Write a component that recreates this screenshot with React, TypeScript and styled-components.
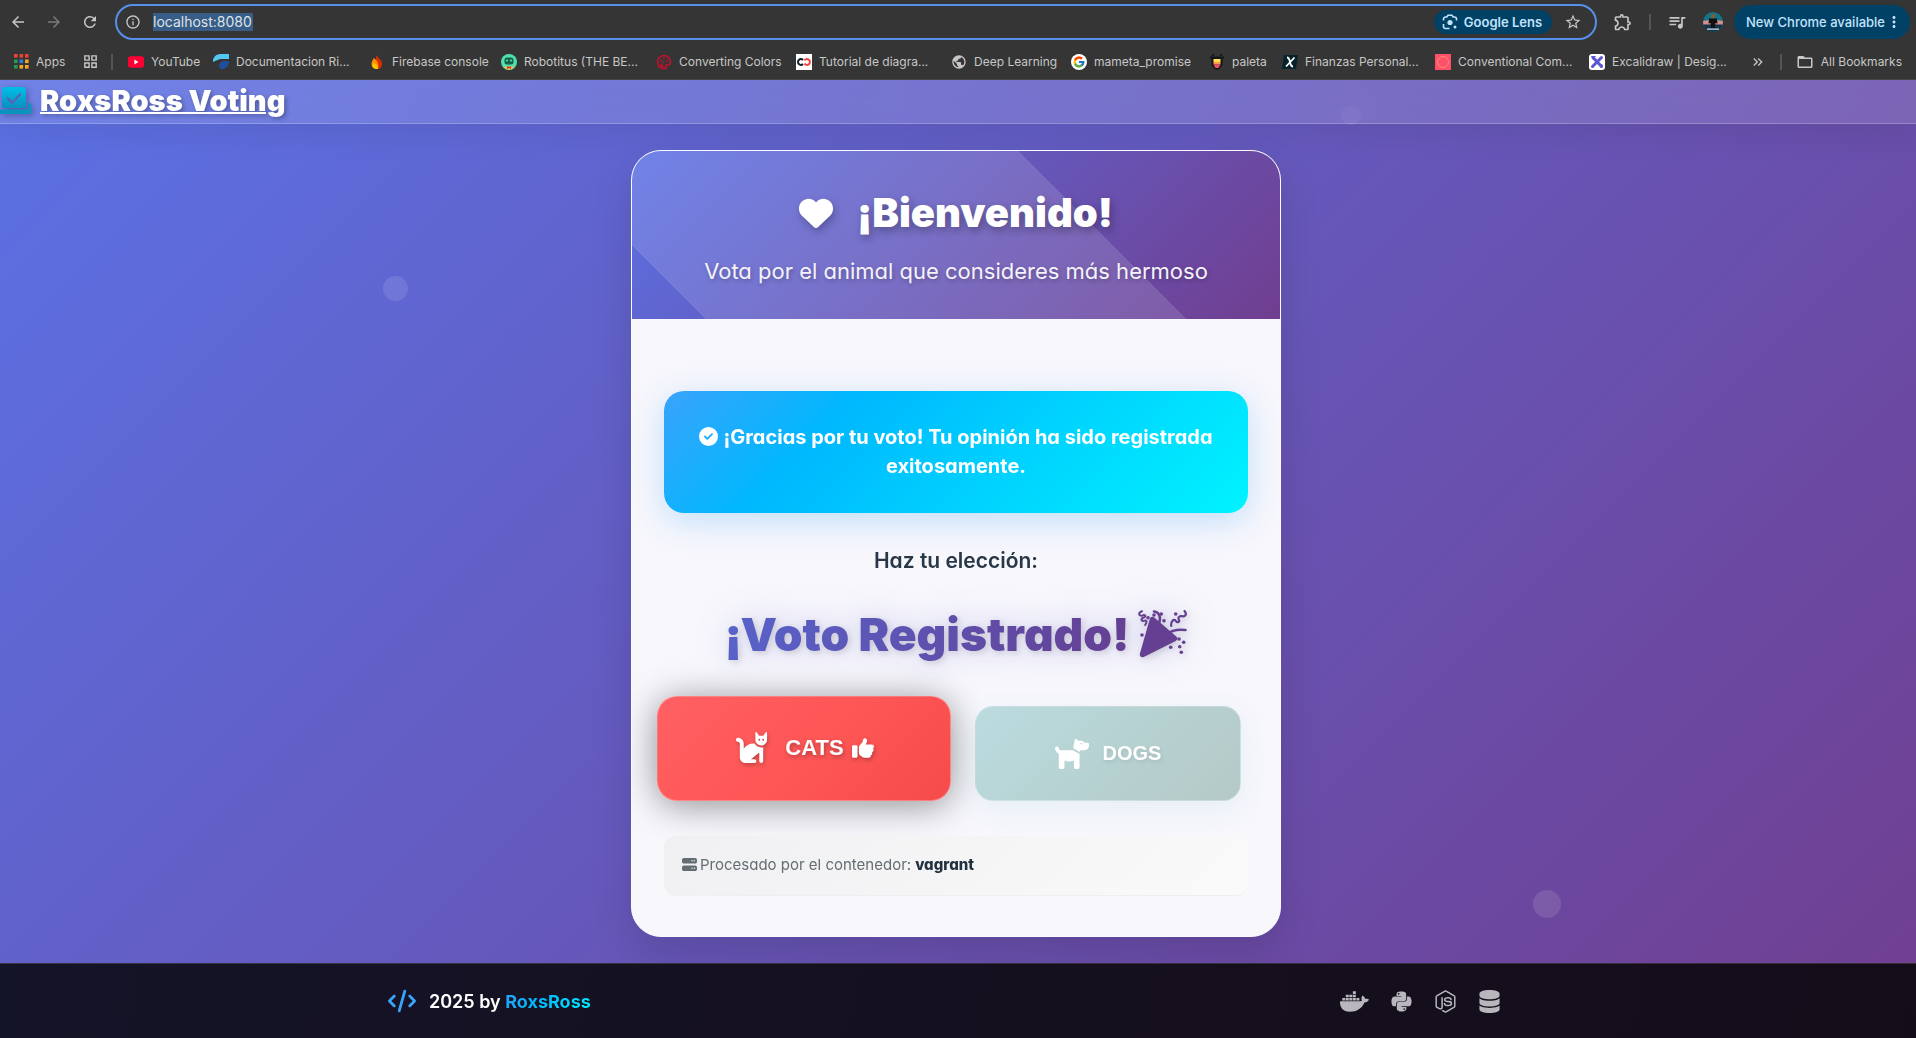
import React from "react";
import styled, { createGlobalStyle, css } from "styled-components";
import {
  MdArrowBack,
  MdArrowForward,
  MdRefresh,
  MdInfoOutline,
  MdStarBorder,
  MdOutlineExtension,
  MdQueueMusic,
  MdMoreVert,
  MdFolderOpen,
  MdPublic,
  MdOutlineGridView,
  MdKeyboardDoubleArrowRight,
} from "react-icons/md";
import { FcGoogle } from "react-icons/fc";
import {
  FaHeart,
  FaCircleCheck,
  FaCat,
  FaDog,
  FaThumbsUp,
  FaServer,
  FaCode,
  FaDocker,
  FaPython,
  FaNodeJs,
  FaDatabase,
} from "react-icons/fa6";

const GlobalStyle = createGlobalStyle`
  *, *::before, *::after { box-sizing: border-box; }
  body {
    margin: 0;
    background: #353535;
    font-family: Inter, "Open Sans", "Liberation Sans", sans-serif;
  }
  h1, h2, h3, p, ul { margin: 0; padding: 0; }
  ul { list-style: none; }
  svg { display: block; flex: none; }
  a { color: inherit; text-decoration: none; }
  button { font: inherit; border: 0; padding: 0; background: none; color: inherit; cursor: pointer; }
`;

const Window = styled.div`
  min-height: 100vh;
  display: flex;
  flex-direction: column;
`;

/* ---------- Browser chrome ---------- */

const Chrome = styled.div`
  background: #353535;
  color: #c7c7c7;
  height: 80px;
  border-bottom: 1px solid #454545;
`;

const Toolbar = styled.div`
  height: 44px;
  display: flex;
  align-items: center;
  padding: 0 6px 0 9px;
`;

const NavGroup = styled.div`
  display: flex;
  gap: 18px;
  margin-right: 16px;
`;

const IconButton = styled.button<{ $dim?: boolean }>`
  display: flex;
  align-items: center;
  justify-content: center;
  color: ${(p) => (p.$dim ? "#7a7a7a" : "#c7c7c7")};
`;

const Omnibox = styled.div`
  flex: 1;
  height: 36px;
  border: 2px solid #5590ea;
  border-radius: 18px;
  display: flex;
  align-items: center;
  padding: 0 13px 0 8px;
  gap: 12px;
`;

const Address = styled.input`
  width: 100px;
  height: 18px;
  border: 0;
  padding: 0;
  outline: none;
  background: #385d86;
  color: #dfe3e8;
  font: 400 14px/18px Inter, "Liberation Sans", sans-serif;
`;

const LensButton = styled.button`
  margin-left: auto;
  height: 24px;
  border-radius: 12px;
  padding: 0 10px 0 8px;
  background: #024166;
  color: #c0e4fd;
  display: flex;
  align-items: center;
  gap: 6px;
  font-size: 13px;
  font-weight: 600;
`;

const ToolGroup = styled.div`
  display: flex;
  align-items: center;
  gap: 16px;
  padding: 0 11px 0 16px;
`;

const Divider = styled.span`
  width: 2px;
  height: 16px;
  background: #555;
`;

const UpdateButton = styled.button`
  height: 34px;
  border-radius: 17px;
  padding: 0 7px 0 12px;
  background: #024166;
  color: #c0e4fd;
  display: flex;
  align-items: center;
  font-size: 13px;
  font-weight: 500;
  white-space: nowrap;
`;

const Bookmarks = styled.nav`
  height: 35px;
  display: flex;
  align-items: center;
  padding: 0 14px;
  font-size: 12px;
`;

const Bookmark = styled.a<{ $width?: number }>`
  flex: 0 0 ${(p) => (p.$width ? p.$width + "px" : "auto")};
  display: flex;
  align-items: center;
  gap: 7px;
  white-space: nowrap;
`;

const BookmarkEnd = styled.div`
  margin-left: auto;
  display: flex;
  align-items: center;
  gap: 14px;
`;

/* ---------- Page ---------- */

const Page = styled.div`
  position: relative;
  flex: 1;
  display: flex;
  flex-direction: column;
  background: linear-gradient(135deg, #5b71e4 0%, #703e90 100%);
  font-feature-settings: "cv11";
  overflow: hidden;
`;

const Bubble = styled.span<{ $size: number; $left: string; $top: string }>`
  position: absolute;
  left: ${(p) => p.$left};
  top: ${(p) => p.$top};
  width: ${(p) => p.$size}px;
  height: ${(p) => p.$size}px;
  border-radius: 50%;
  background: rgba(255, 255, 255, 0.11);
`;

const Header = styled.header`
  position: relative;
  height: 44px;
  display: flex;
  align-items: center;
  background: rgba(255, 255, 255, 0.13);
  border-bottom: 1px solid rgba(255, 255, 255, 0.22);
  box-shadow: 0 8px 32px rgba(0, 0, 0, 0.08);
  backdrop-filter: blur(20px);
`;

const Brand = styled.a`
  display: flex;
  align-items: center;
  gap: 8px;
  color: #fff;
  font-size: 29px;
  font-weight: 900;
  line-height: 40px;
  padding-bottom: 2px;

  svg { filter: drop-shadow(2px 2px 3px rgba(0, 0, 0, 0.3)); }
  span {
    text-decoration: underline;
    text-decoration-thickness: 2px;
    text-shadow: 2px 2px 4px rgba(0, 0, 0, 0.3);
  }
`;

const Main = styled.main`
  position: relative;
  flex: 1;
  padding: 26px 18px 26px 14px;
`;

const Card = styled.section`
  max-width: 650px;
  margin: 0 auto;
  border: 1px solid #fafaff;
  border-radius: 30px;
  background: #f7f7fc;
  overflow: hidden;
  box-shadow: 0 16px 40px rgba(0, 0, 0, 0.13);
`;

const CardHeader = styled.div`
  padding: 32px;
  display: flex;
  flex-direction: column;
  gap: 12px;
  text-align: center;
  color: #fff;
  background:
    linear-gradient(45deg, transparent 9%, rgba(255, 255, 255, 0.13) 9%, rgba(255, 255, 255, 0.13) 68%, transparent 68%),
    linear-gradient(135deg, #5b71e4 0%, #703e90 100%);
`;

const Welcome = styled.h1`
  display: flex;
  align-items: center;
  justify-content: center;
  gap: 24px;
  font-size: 40px;
  line-height: 60px;
  font-weight: 900;
  text-shadow: 2px 4px 8px rgba(0, 0, 0, 0.3);

  svg { filter: drop-shadow(2px 4px 4px rgba(0, 0, 0, 0.25)); }
`;

const Lead = styled.p`
  font-size: 22px;
  line-height: 32px;
  font-weight: 400;
  color: #f4f2fb;
  text-shadow: 1px 2px 4px rgba(0, 0, 0, 0.25);
`;

const CardBody = styled.div`
  padding: 72px 32px 40px;
  display: flex;
  flex-direction: column;
`;

const Alert = styled.div`
  padding: 32px;
  border-radius: 20px;
  text-align: center;
  color: #fff;
  font-size: 20px;
  line-height: 29px;
  font-weight: 700;
  background: linear-gradient(135deg, #3aa3fb 0%, #00b8fe 28%, #00f3ff 100%);
  box-shadow: 0 8px 32px rgba(58, 163, 251, 0.28);

  svg { display: inline-block; vertical-align: -2px; margin-right: 5px; }
`;

const Prompt = styled.h3`
  margin-top: 30px;
  text-align: center;
  font-size: 21px;
  line-height: 36px;
  font-weight: 600;
  color: #283848;
`;

const Result = styled.h2`
  margin: 25px auto 32px;
  display: flex;
  align-items: center;
  gap: 8px;
  font-size: 46px;
  line-height: 60px;
  font-weight: 900;
  color: #653f92;
  filter: drop-shadow(2px 2px 3px rgba(0, 0, 0, 0.14)) drop-shadow(0 0 16px rgba(90, 80, 200, 0.25));

  span {
    color: transparent;
    background: linear-gradient(100deg, #5763cb 0%, #653f92 100%);
    background-clip: text;
    -webkit-background-clip: text;
  }
`;

const Choices = styled.div`
  display: flex;
  align-items: flex-end;
  justify-content: center;
  gap: 24px;
`;

const Choice = styled.button<{ $kind: "cats" | "dogs"; $selected?: boolean }>`
  display: flex;
  align-items: center;
  justify-content: center;
  border: 1px solid rgba(255, 255, 255, 0.25);
  font-family: "Liberation Sans", Arial, sans-serif;
  font-weight: 700;
  color: #fff;
  text-shadow: 1px 2px 4px rgba(0, 0, 0, 0.3);

  svg { filter: drop-shadow(1px 2px 2px rgba(0, 0, 0, 0.25)); }

  ${(p) =>
    p.$selected
      ? css`
          width: 294px;
          height: 105px;
          margin-left: -14px;
          padding-bottom: 2px;
          border-radius: 20px;
          gap: 16px;
          font-size: 22px;
          box-shadow: 0 4px 36px rgba(0, 0, 0, 0.42);
        `
      : css`
          width: 266px;
          height: 95px;
          border-radius: 18px;
          gap: 14px;
          font-size: 20px;
          text-shadow: 1px 2px 4px rgba(0, 0, 0, 0.1);
          box-shadow: 0 8px 28px rgba(78, 180, 190, 0.1);
          svg { filter: none; }
        `}
  background: ${(p) =>
    p.$kind === "cats"
      ? "linear-gradient(135deg, #ff6063 0%, #ff5656 50%, #f54b4b 100%)"
      : "linear-gradient(135deg, #badbdf 0%, #b4c9c6 100%)"};
`;

const ChoiceLabel = styled.span`
  display: flex;
  align-items: center;
  gap: 8px;
`;

const HostInfo = styled.p`
  margin-top: 35px;
  height: 60px;
  display: flex;
  align-items: center;
  padding: 0 18px 2px;
  border-radius: 12px;
  border-bottom: 1px solid #eeeff1;
  background: linear-gradient(135deg, #f0f0f2 0%, #fafafb 100%);
  color: #636e73;
  font-size: 15px;
  line-height: 24px;

  svg { margin-right: 3px; }
  strong { color: #22313f; margin-left: 4px; font-weight: 800; }
`;

const Footer = styled.footer`
  position: relative;
  height: 75px;
  border-top: 1px solid rgba(255, 255, 255, 0.14);
  background: linear-gradient(100deg, #141428 0%, #15101f 50%, #150c1a 100%);
`;

const FooterInner = styled.div`
  max-width: 1140px;
  height: 100%;
  margin: 0 auto;
  padding-right: 27px;
  display: flex;
  align-items: center;
  justify-content: space-between;
`;

const Credit = styled.p`
  display: flex;
  align-items: center;
  gap: 13px;
  color: #fff;
  font-size: 18px;
  font-weight: 600;

  svg { color: #3aa3fb; }
  a {
    font-weight: 700;
    color: transparent;
    background: linear-gradient(135deg, #2e9dfb 0%, #00b8fe 40%, #00f0fe 100%);
    background-clip: text;
    -webkit-background-clip: text;
  }
`;

const TechList = styled.ul`
  display: flex;
  align-items: center;
  gap: 21px;
  color: #b9b7bd;
`;

/* ---------- Drawings ---------- */

const AppsIcon = () => {
  const colors = ["#ea4335", "#ea4335", "#ea4335", "#1f9d55", "#2f7de1", "#f5a623", "#1f9d55", "#f5a623", "#f5a623"];
  return (
    <svg width="15" height="15" viewBox="0 0 15 15">
      {colors.map((c, i) => (
        <rect key={i} x={(i % 3) * 5.5} y={Math.floor(i / 3) * 5.5} width="3.6" height="3.6" fill={c} />
      ))}
    </svg>
  );
};

const YouTubeIcon = () => (
  <svg width="16" height="16" viewBox="0 0 16 16">
    <rect y="2.3" width="16" height="11.4" rx="2.6" fill="#ff0033" />
    <path d="M6.4 5.6v4.8L10.4 8z" fill="#fff" />
  </svg>
);

const RiveIcon = () => (
  <svg width="16" height="16" viewBox="0 0 16 16">
    <path d="M0 6C1 2 4 0 8 0h8v5H9C5 5 3 7 0 8z" fill="#54c6f2" />
    <path d="M6 12c0-3 2-5 6-5h4c0 5-3 8-8 8.5z" fill="#1d4f9c" />
  </svg>
);

const FirebaseIcon = () => (
  <svg width="16" height="16" viewBox="0 0 16 16">
    <path d="M7.5 1c1 3 6 5 5.500 9.500C12.700 13.500 10.500 15 8.500 15L6 8z" fill="#dd2c00" />
    <path d="M4.500 4c3 2 6 5 4.500 11C5 15.500 2.500 13 2.500 10c0-2.500 1.500-3.500 2-6z" fill="#ff9100" />
    <path d="M5 9c2 1 4 3 4 6-3 .3-5-1-6-3z" fill="#ffc400" />
  </svg>
);

const RobotIcon = () => (
  <svg width="16" height="16" viewBox="0 0 16 16">
    <circle cx="8" cy="8" r="8" fill="#4fe0ae" />
    <rect x="3.500" y="3.500" width="9" height="7" rx="2.500" fill="#15614a" />
    <circle cx="6" cy="6.500" r="1.100" fill="#4fe0ae" />
    <circle cx="10" cy="6.500" r="1.100" fill="#4fe0ae" />
    <path d="M2.500 12.500h11A8 8 0 0 1 8 16a8 8 0 0 1-5.500-3.500z" fill="#f0c04a" />
    <path d="M6 12l2 1 2-1v3l-2-1-2 1z" fill="#d22f2f" />
  </svg>
);

const PaletteIcon = () => (
  <svg width="16" height="16" viewBox="0 0 16 16" fill="none" stroke="#c8102e" strokeWidth="1.500">
    <path d="M8 1.500a6.500 6.500 0 1 0 2 12.700c-1-2 0-4 2-3.200 1.500.4 2.500-1 2.500-3A6.500 6.500 0 0 0 8 1.500z" />
    <path d="M2.500 13.500l3-3 2 3" />
    <g fill="#c8102e" stroke="none">
      <circle cx="5" cy="6.500" r="1" />
      <circle cx="8" cy="4.500" r="1" />
      <circle cx="11" cy="6.500" r="1" />
      <circle cx="7.500" cy="8.500" r="1" />
    </g>
  </svg>
);

const RingsIcon = () => (
  <svg width="16" height="16" viewBox="0 0 16 16" fill="none" strokeWidth="2">
    <rect width="16" height="16" fill="#fff" />
    <path d="M7 6a2.900 2.900 0 1 0 0 4" stroke="#14202b" />
    <path d="M8.500 6.500a2.900 2.900 0 1 1 0 3" stroke="#f0443c" />
  </svg>
);

const GoogleIcon = () => (
  <svg width="16" height="16" viewBox="0 0 16 16">
    <circle cx="8" cy="8" r="8" fill="#fff" />
    <FcGoogle x="1.500" y="1.500" size={13} />
  </svg>
);

const CupIcon = () => (
  <svg width="16" height="16" viewBox="0 0 16 16">
    <path d="M1 2.500h14v2H1zM3 0h2v2H3zM11 0h2v2h-2z" fill="#161616" />
    <path d="M2.500 4h11v7L10 15.500H6L2.500 11z" fill="#161616" />
    <path d="M4.500 5h7v3h-7z" fill="#ffe14d" />
    <path d="M4.500 8h7v2.500h-7z" fill="#ff9a4d" />
    <path d="M4.500 10.500h7L9.500 14h-3z" fill="#ef4d6f" />
  </svg>
);

const FinanceIcon = () => (
  <svg width="16" height="16" viewBox="0 0 16 16">
    <path d="M2 1h14l-2 14H0z" fill="#06222b" />
    <path d="M5 3.500c2 0 2.500 2 3 4.500s1 4.500 3 4.500M12.500 3.500L4 12.500" fill="none" stroke="#fff" strokeWidth="1.800" />
  </svg>
);

const CommitIcon = () => (
  <svg width="16" height="16" viewBox="0 0 16 16">
    <rect width="16" height="16" fill="#fe5068" />
    <circle cx="8" cy="8" r="5.500" fill="none" stroke="#ff8c76" />
  </svg>
);

const ExcalidrawIcon = () => (
  <svg width="16" height="16" viewBox="0 0 16 16">
    <rect width="16" height="16" rx="3" fill="#fff" />
    <path d="M4 3.500l8.500 9M12.500 3.500l-9 9" stroke="#5b57d1" strokeWidth="3" strokeLinecap="round" />
    <path d="M2 2h5L4 6zM10 9l4 2-2 3z" fill="#5b57d1" />
  </svg>
);

const LensIcon = () => (
  <svg width="16" height="16" viewBox="0 0 16 16" fill="none" stroke="#c0e4fd" strokeWidth="1.600">
    <path d="M1.500 6.500V5A2 2 0 0 1 3.500 3h1.300L6 1.300h4L11.200 3h1.300a2 2 0 0 1 2 2v1.500M1.500 10v2.500a2 2 0 0 0 2 2H7.500" />
    <circle cx="8" cy="8.500" r="2.600" fill="#c0e4fd" stroke="none" />
    <circle cx="13" cy="13" r="1.500" fill="#c0e4fd" stroke="none" />
  </svg>
);

const Avatar = () => (
  <svg width="20" height="20" viewBox="0 0 20 20">
    <clipPath id="avatar-clip"><circle cx="10" cy="10" r="10" /></clipPath>
    <g clipPath="url(#avatar-clip)">
      <rect width="20" height="20" fill="#137488" />
      <path d="M0 9l6-1 8 0 6 1v4H0z" fill="#d58f8f" />
      <path d="M0 12.500h20V20H0z" fill="#12364c" />
      <path d="M6 6.500h8l.5 5-2-.5-.5 6h-1.500L10 13l-.5 4H8l-.5-6-2 .5z" fill="#111" />
      <circle cx="10" cy="4" r="2.200" fill="#8a5a32" />
      <path d="M4 16.500h12v1.200H4z" fill="#cfe2ea" />
    </g>
  </svg>
);

const BallotIcon = () => (
  <svg width="32" height="30" viewBox="0 0 32 30">
    <defs>
      <linearGradient id="ballot" x1="0" y1="0" x2="0" y2="1">
        <stop offset="0" stopColor="#00bfe6" />
        <stop offset="1" stopColor="#0b8fc0" />
      </linearGradient>
    </defs>
    <path
      fill="url(#ballot)"
      fillRule="evenodd"
      d="M5 1h18a3 3 0 0 1 3 3v18H2V4a3 3 0 0 1 3-3zm2.800 9.800L6.300 12.400l6 6L21.500 8.500l-1.600-1.500-7.600 8.300z"
    />
    <path fill="#0b93bf" d="M28 17h1a2.500 2.500 0 0 1 2.500 2.500v6A2.500 2.500 0 0 1 29 28H0v-4.500h28z" />
  </svg>
);

const PartyPopper = () => (
  <svg width="50" height="50" viewBox="0 0 50 50" fill="none" stroke="currentColor" strokeLinecap="round" strokeLinejoin="round">
    <path d="M14.500 10.500L36.500 29.500L4.500 45.500z" fill="currentColor" strokeWidth="5.500" />
    <path d="M4 2.200C-1 4 1.500 8 5 6.300c3-1 3 1.800.5 2.400C2 9.500 3.500 13 7 11.600c2.200-.6 1.700 2.400.2 4.400" strokeWidth="2" />
    <path d="M16 2.500c5 .5 7 5 5.500 10.500" strokeWidth="2.600" />
    <path d="M46.500 2c3 3.500.5 6-2.500 5.200-3.500-.7-4 1.800-3 3.800 1 2.300-1.800 3-3.300.8-2-2.500-5 .5-4.500 5.200" strokeWidth="2.200" />
    <path d="M31 24c4-3.500 9-3.700 16.500-3" strokeWidth="2.600" />
    <g fill="currentColor" stroke="none">
      {[[10, 8.7], [16, 6], [23.300, 5], [37.700, 5], [26, 11.700], [4, 26], [41, 30], [45.700, 33.300], [32.700, 38.300], [41.700, 37.700], [43.300, 43.300]].map(
        ([x, y]) => (
          <circle key={x + "-" + y} cx={x} cy={y} r="1.800" />
        ),
      )}
    </g>
  </svg>
);

const bookmarks: { label: string; width: number; icon: React.ReactNode }[] = [
  { label: "YouTube", width: 85, icon: <YouTubeIcon /> },
  { label: "Documentacion Ri...", width: 156, icon: <RiveIcon /> },
  { label: "Firebase console", width: 132, icon: <FirebaseIcon /> },
  { label: "Robotitus (THE BE...", width: 155, icon: <RobotIcon /> },
  { label: "Converting Colors", width: 140, icon: <PaletteIcon /> },
  { label: "Tutorial de diagra...", width: 155, icon: <RingsIcon /> },
  { label: "Deep Learning", width: 120, icon: <MdPublic size={16} /> },
  { label: "mameta_promise", width: 138, icon: <GoogleIcon /> },
  { label: "paleta", width: 73, icon: <CupIcon /> },
  { label: "Finanzas Personal...", width: 153, icon: <FinanceIcon /> },
  { label: "Conventional Com...", width: 154, icon: <CommitIcon /> },
  { label: "Excalidraw | Desig...", width: 140, icon: <ExcalidrawIcon /> },
];

export default function App() {
  return (
    <Window>
      <GlobalStyle />
      <Chrome>
        <Toolbar>
          <NavGroup>
            <IconButton aria-label="Back"><MdArrowBack size={18} /></IconButton>
            <IconButton aria-label="Forward" $dim><MdArrowForward size={18} /></IconButton>
            <IconButton aria-label="Reload"><MdRefresh size={18} /></IconButton>
          </NavGroup>
          <Omnibox>
            <MdInfoOutline size={16} />
            <Address aria-label="Address" defaultValue="localhost:8080" spellCheck={false} />
            <LensButton><LensIcon />Google Lens</LensButton>
            <IconButton aria-label="Bookmark this page"><MdStarBorder size={18} /></IconButton>
          </Omnibox>
          <ToolGroup>
            <IconButton aria-label="Extensions"><MdOutlineExtension size={20} /></IconButton>
            <Divider />
            <IconButton aria-label="Media"><MdQueueMusic size={20} /></IconButton>
            <IconButton aria-label="Profile"><Avatar /></IconButton>
          </ToolGroup>
          <UpdateButton>New Chrome available<MdMoreVert size={18} /></UpdateButton>
        </Toolbar>
        <Bookmarks>
          <Bookmark href="#" $width={68}><AppsIcon />Apps</Bookmark>
          <Bookmark href="#" $width={29} aria-label="Tab groups"><MdOutlineGridView size={17} /></Bookmark>
          <Bookmark as="span" $width={17}><Divider /></Bookmark>
          {bookmarks.map((b) => (
            <Bookmark key={b.label} href="#" $width={b.width}>{b.icon}{b.label}</Bookmark>
          ))}
          <BookmarkEnd>
            <IconButton aria-label="More bookmarks"><MdKeyboardDoubleArrowRight size={16} /></IconButton>
            <Divider />
            <Bookmark href="#"><MdFolderOpen size={18} />All Bookmarks</Bookmark>
          </BookmarkEnd>
        </Bookmarks>
      </Chrome>

      <Page>
        <Bubble $size={20} $left="70%" $top="25px" />
        <Bubble $size={25} $left="20%" $top="196px" />
        <Bubble $size={28} $left="80%" $top="810px" />
        <Header>
          <Brand href="#"><BallotIcon /><span>RoxsRoss Voting</span></Brand>
        </Header>
        <Main>
          <Card>
            <CardHeader>
              <Welcome><FaHeart size={34} />¡Bienvenido!</Welcome>
              <Lead>Vota por el animal que consideres más hermoso</Lead>
            </CardHeader>
            <CardBody>
              <Alert role="status">
                <FaCircleCheck size={19} />¡Gracias por tu voto! Tu opinión ha sido registrada exitosamente.
              </Alert>
              <Prompt>Haz tu elección:</Prompt>
              <Result><span>¡Voto Registrado!</span><PartyPopper /></Result>
              <Choices>
                <Choice $kind="cats" $selected>
                  <FaCat size={35} />
                  <ChoiceLabel>CATS<FaThumbsUp size={22} /></ChoiceLabel>
                </Choice>
                <Choice $kind="dogs">
                  <FaDog size={34} />
                  <ChoiceLabel>DOGS</ChoiceLabel>
                </Choice>
              </Choices>
              <HostInfo>
                <FaServer size={15} />Procesado por el contenedor: <strong>vagrant</strong>
              </HostInfo>
            </CardBody>
          </Card>
        </Main>
        <Footer>
          <FooterInner>
            <Credit><FaCode size={28} /><span>2025 by <a href="#">RoxsRoss</a></span></Credit>
            <TechList>
              <li><FaDocker size={29} /></li>
              <li><FaPython size={23} /></li>
              <li><FaNodeJs size={23} /></li>
              <li><FaDatabase size={23} /></li>
            </TechList>
          </FooterInner>
        </Footer>
      </Page>
    </Window>
  );
}
